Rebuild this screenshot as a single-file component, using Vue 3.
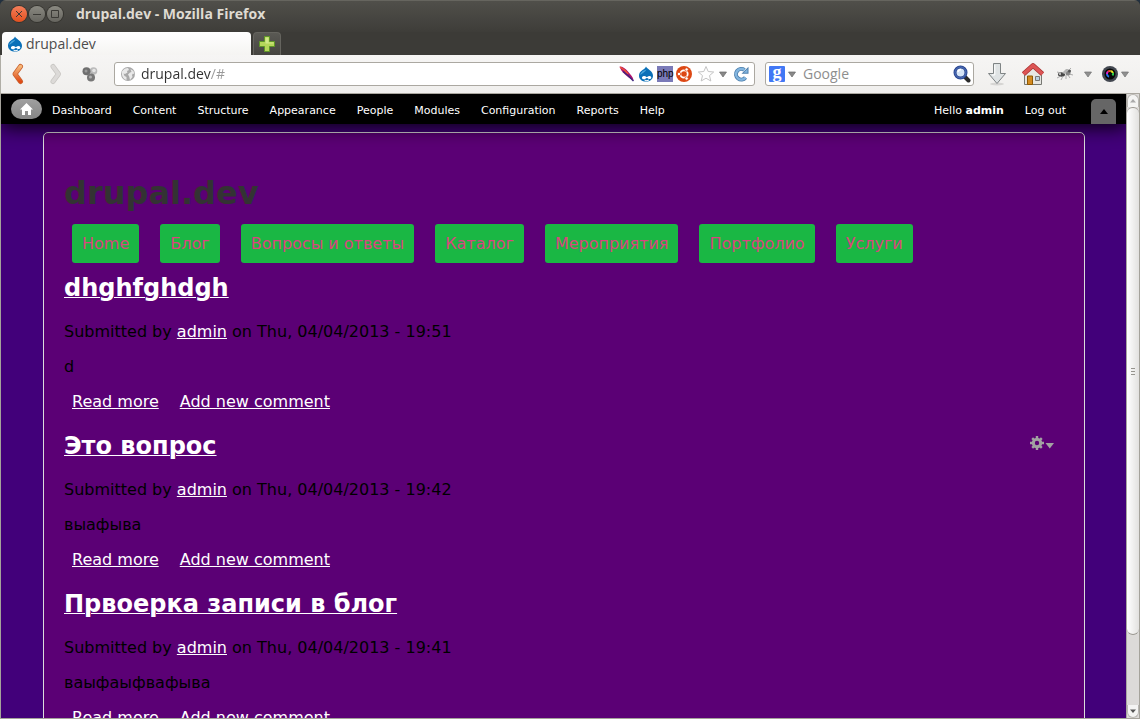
<script setup>
import { ref } from 'vue'

const address = ref('drupal.dev/#')
const query = ref('')
const adminLinks = ['Dashboard', 'Content', 'Structure', 'Appearance', 'People', 'Modules', 'Configuration', 'Reports', 'Help']
const menu = ['Home', 'Блог', 'Вопросы и ответы', 'Каталог', 'Мероприятия', 'Портфолио', 'Услуги']
const posts = [
  { title: 'dhghfghdgh', time: '19:51', body: 'd' },
  { title: 'Это вопрос', time: '19:42', body: 'выафыва', tools: true },
  { title: 'Првоерка записи в блог', time: '19:41', body: 'ваыфаыфвафыва' },
]
</script>

<template>
  <div class="window">
    <header class="titlebar">
      <button class="win close" aria-label="Close">
        <svg viewBox="0 0 16 16"><path d="M5 5l6 6M11 5l-6 6" /></svg>
      </button>
      <button class="win" aria-label="Minimize">
        <svg viewBox="0 0 16 16"><path d="M4 8.500h8" /></svg>
      </button>
      <button class="win" aria-label="Maximize">
        <svg viewBox="0 0 16 16"><path d="M4.500 4.500h7v7h-7z" /></svg>
      </button>
      <span class="title">drupal.dev - Mozilla Firefox</span>
    </header>

    <div class="tabs">
      <button class="tab">
        <svg class="i16" viewBox="0 0 16 16">
          <path d="M8 .5C8.600 2 10 2.800 11.500 3.900 13.800 5.500 15 7.500 15 9.700 15 13.200 12 15.500 8 15.500S1 13.200 1 9.700C1 7.500 2.200 5.600 4.500 4 6.200 2.900 7.500 2 8 .5z" fill="#0a70b8" />
          <path d="M6 4.500C4 5.500 2.600 7 2.300 9 4.500 7 7 6 8.500 3.500z" fill="#4ba6dc" />
          <path d="M4 11.200C5 9.600 7 9.800 8.800 11.200 10.500 9.800 12.600 9.600 13.200 11 13.700 12.700 12 13.400 11 13 10 12.600 9.500 11.800 8.800 12 7.800 12.300 7 13.500 5.500 13.300 4.300 13.100 3.700 12.200 4 11.200z" fill="#fff" />
          <path d="M6.500 14.200q2.500 1 4.500-.2" stroke="#fff" fill="none" />
        </svg>
        <span>drupal.dev</span>
      </button>
      <button class="newtab" aria-label="New tab">
        <svg class="i16" viewBox="0 0 16 16"><path d="M5.500 .5h5v5H15.500v5h-5V15.500h-5v-5H.5v-5h5z" fill="#b6d65a" stroke="#5f9628" /><path d="M6.500 1.500h3v5H14.500v1H6.500z" fill="#d2e88a" /></svg>
      </button>
    </div>

    <div class="toolbar">
      <button class="icon back" aria-label="Back">
        <svg width="14" height="22" viewBox="0 0 14 22">
          <defs><linearGradient id="og" x2="0" y2="1"><stop stop-color="#f6b778" /><stop offset="1" stop-color="#df4a17" /></linearGradient></defs>
          <path d="M9.500 3.500L4 11 9.500 18.500" fill="none" stroke="#c9622f" stroke-width="5" stroke-linecap="round" stroke-linejoin="round" />
          <path d="M9.500 3.500L4 11 9.500 18.500" fill="none" stroke="url(#og)" stroke-width="3.500" stroke-linecap="round" stroke-linejoin="round" />
        </svg>
      </button>
      <button class="icon forward" aria-label="Forward">
        <svg width="14" height="22" viewBox="0 0 14 22">
          <path d="M4 3.500L9.500 11 4 18.500" fill="none" stroke="#c8c6c3" stroke-width="5" stroke-linecap="round" stroke-linejoin="round" />
          <path d="M4 3.500L9.500 11 4 18.500" fill="none" stroke="#dcdad8" stroke-width="3.500" stroke-linecap="round" stroke-linejoin="round" />
        </svg>
      </button>
      <button class="icon dots" aria-label="Extension">
        <svg class="i16" viewBox="0 0 16 16"><circle cx="11.500" cy="5" r="3.800" fill="#bababa" /><circle cx="12" cy="4.500" r="1.800" fill="#e4e4e4" /><circle cx="4.500" cy="5.200" r="4" fill="#6f6f6f" /><circle cx="4" cy="5" r="1.500" fill="#999" /><circle cx="9" cy="11.500" r="4" fill="#777" /><circle cx="8.500" cy="11" r="1.500" fill="#b0b0b0" /></svg>
      </button>

      <div class="field address">
        <svg class="i16" viewBox="0 0 16 16"><circle cx="8" cy="8" r="7" fill="#a8a8a8" /><path d="M2 5.500C3.500 3 6 2 8 2l1 2-2 1 .5 1.500L5 8 3.500 7.500 4.500 10 6.500 11v3C3 13 1.500 10 2 5.500zM10.500 3l3 2 .9 3.500-1.400-1-1 1.500.5 2L10 14l-.8-3.500-1.200-2L10 6.500l1.500-.5z" fill="#e9e9e9" /></svg>
        <input v-model="address" class="url" aria-label="Address" />
        <svg class="i16" viewBox="0 0 16 16"><path d="M.5.5C4 .5 6.500 2.500 9 5.500S14 11 14.500 14C11 13 8 10.500 5.500 8S1.500 3.500.5.500z" fill="#b0126e" /><path d="M1 1l5 3.500L9 8" stroke="#ee5530" fill="none" stroke-width="1.500" /><path d="M4 5.500L9 9.500l5.500 5.500" stroke="#3d267e" fill="none" stroke-width="1.500" /></svg>
        <svg class="i16" viewBox="0 0 16 16">
          <path d="M8 .5C8.600 2 10 2.800 11.500 3.900 13.800 5.500 15 7.500 15 9.700 15 13.200 12 15.500 8 15.500S1 13.200 1 9.700C1 7.500 2.200 5.600 4.500 4 6.200 2.900 7.500 2 8 .5z" fill="#0a70b8" />
          <path d="M6 4.500C4 5.500 2.600 7 2.300 9 4.500 7 7 6 8.500 3.500z" fill="#4ba6dc" />
          <path d="M4 11.200C5 9.600 7 9.800 8.800 11.200 10.500 9.800 12.600 9.600 13.200 11 13.700 12.700 12 13.400 11 13 10 12.600 9.500 11.800 8.800 12 7.800 12.300 7 13.500 5.500 13.300 4.300 13.100 3.700 12.200 4 11.200z" fill="#fff" />
          <path d="M6.500 14.200q2.500 1 4.500-.2" stroke="#fff" fill="none" />
        </svg>
        <span class="php">php</span>
        <svg class="i16" viewBox="0 0 16 16"><circle cx="8" cy="8" r="8" fill="#dd4814" /><circle cx="8" cy="8" r="3.700" fill="none" stroke="#fff" stroke-width="1.800" /><g fill="#fff" stroke="#dd4814" stroke-width=".8"><circle cx="3" cy="8" r="1.700" /><circle cx="10.600" cy="3.500" r="1.700" /><circle cx="10.600" cy="12.500" r="1.700" /></g></svg>
        <svg class="star" viewBox="0 0 18 18"><path d="M9 1.500l2.200 5 5.500.5-4.200 3.600 1.300 5.400L9 13.200 4.200 16l1.300-5.400L1.300 7l5.500-.5z" fill="#fefefe" stroke="#c4c4c4" /></svg>
        <svg class="caret" viewBox="0 0 10 8"><path d="M1.500 2h7L5 7z" fill="#888" stroke="#686868" stroke-width=".7" /></svg>
        <svg class="reload" viewBox="0 0 16 16"><path d="M11.500 4A5.300 5.300 0 1 0 12.500 11.500" fill="none" stroke="#4d7fac" stroke-width="4" /><path d="M15.500.8v7H8.500z" fill="#4d7fac" /><path d="M11.500 4A5.300 5.300 0 1 0 12.500 11.500" fill="none" stroke="#82b5df" stroke-width="2.400" /><path d="M14.500 3v3.800H10.500z" fill="#82b5df" /></svg>
      </div>

      <div class="field search">
        <span class="google">g</span>
        <svg class="caret" viewBox="0 0 10 8"><path d="M1.500 2h7L5 7z" fill="#888" stroke="#686868" stroke-width=".7" /></svg>
        <input v-model="query" placeholder="Google" aria-label="Search" />
        <svg class="lens" viewBox="0 0 18 18"><path d="M12 12l3.500 3.500" stroke="#2a2a2a" stroke-width="4" stroke-linecap="round" /><circle cx="7.500" cy="7.500" r="5.500" fill="#d5e4f6" stroke="#28458f" stroke-width="3" /><circle cx="7.500" cy="7.500" r="5.500" fill="none" stroke="#5577c0" /><path d="M5 7a3 3 0 0 1 3-2.500" stroke="#fff" fill="none" stroke-width="1.500" /></svg>
      </div>

      <button class="icon download" aria-label="Downloads">
        <svg width="20" height="24" viewBox="0 0 20 24"><ellipse cx="10" cy="22" rx="7" ry="1.500" fill="#d6d5d3" /><path d="M6.500 1.500h7v10h5L10 21.500 1.500 11.500h5z" fill="#dfe3e4" stroke="#7f8485" /><path d="M7.800 3v10H5" stroke="#fff" fill="none" /></svg>
      </button>
      <button class="icon home" aria-label="Home">
        <svg width="24" height="24" viewBox="0 0 24 24"><path d="M3.500 11L12 4l8.500 7v11.500h-17z" fill="#e6e6e2" stroke="#777873" /><path d="M6.500 14h5v8.500h-5z" fill="#d48a20" stroke="#8f5902" /><path d="M14.500 14.500h4v4h-4z" fill="#b8d0e0" stroke="#777" /><path d="M2.500 12L12 3.500 21.500 12" fill="none" stroke="#a93232" stroke-width="5" stroke-linejoin="round" /><path d="M2.500 12L12 3.500 21.500 12" fill="none" stroke="#dc5555" stroke-width="3.500" stroke-linejoin="round" /></svg>
      </button>
      <button class="icon fly" aria-label="Firebug">
        <svg width="18" height="16" viewBox="0 0 18 16"><ellipse cx="5.500" cy="8.500" rx="3.500" ry="2.200" fill="#484848" /><circle cx="12" cy="7" r="2.500" fill="#888" /><circle cx="13.500" cy="5" r="1.500" fill="#555" /><path d="M6 7L10 3l3 0-4 5z" fill="#b5b5b5" /><path d="M1 12l4-2M5 14l2-4M10 13V9M14 12l-2-3M17 9l-4-1M1 6l4 1M15 2l-2 2" stroke="#999" fill="none" stroke-width=".8" /><circle cx="4" cy="8" r="1" fill="#ddd" /></svg>
      </button>
      <button class="icon more" aria-label="Firebug options"><svg class="caret" viewBox="0 0 10 8"><path d="M1.500 2h7L5 7z" fill="#909090" stroke="#747474" stroke-width=".7" /></svg></button>
      <button class="icon color" aria-label="Color picker">
        <svg width="18" height="18" viewBox="0 0 18 18"><circle cx="9" cy="9" r="8" fill="#424750" /><circle cx="9" cy="9" r="5.500" fill="#070707" /><g fill="none" stroke-width="2"><path d="M6 9a3 3 0 0 1 1-2.500" stroke="#dd1fc8" /><path d="M7 6.500A3 3 0 0 1 9.500 6" stroke="#f04a30" /><path d="M9.500 6A3 3 0 0 1 12 8" stroke="#e4df22" /><path d="M12 8a3 3 0 0 1-.5 2.500" stroke="#27cf4b" /><path d="M6 9a3 3 0 0 0 2 2.800" stroke="#2575ed" /></g></svg>
      </button>
      <button class="icon" aria-label="Color options"><svg class="caret" viewBox="0 0 10 8"><path d="M1.500 2h7L5 7z" fill="#909090" stroke="#747474" stroke-width=".7" /></svg></button>
    </div>

    <div class="view">
      <div class="page">
        <nav class="admin">
          <a class="adminhome" href="#" aria-label="Home"><svg width="13" height="12" viewBox="0 0 13 12"><path d="M6.500 0L13 6.500h-2V12H8V8H5v4H2V6.500H0z" fill="#fff" /></svg></a>
          <a v-for="l in adminLinks" :key="l" href="#">{{ l }}</a>
          <a class="hello" href="#">Hello <b>admin</b></a>
          <a href="#">Log out</a>
          <button class="toggle" aria-label="Hide shortcuts"><svg width="8" height="5" viewBox="0 0 8 5"><path d="M4 0l4 5H0z" fill="#000" /></svg></button>
        </nav>

        <main class="box">
          <h1>drupal.dev</h1>
          <nav class="menu">
            <a v-for="m in menu" :key="m" href="#">{{ m }}</a>
          </nav>
          <article v-for="p in posts" :key="p.time">
            <h2><a href="#">{{ p.title }}</a></h2>
            <button v-if="p.tools" class="gear" aria-label="Configure">
              <svg width="24" height="14" viewBox="0 0 24 14"><circle cx="7" cy="7" r="3.700" fill="none" stroke="#a2a2a2" stroke-width="3" /><path d="M7 0v3M7 11v3M0 7h3M11 7h3M2.200 2.200l2 2M9.800 9.800l2 2M11.800 2.200l-2 2M4.200 9.800l-2 2" stroke="#a2a2a2" stroke-width="2.400" /><path d="M15.500 7h8.500l-4.200 5.500z" fill="#a2a2a2" /></svg>
            </button>
            <p class="meta">Submitted by <a href="#">admin</a> on Thu, 04/04/2013 - {{ p.time }}</p>
            <p>{{ p.body }}</p>
            <div class="links"><a href="#">Read more</a><a href="#">Add new comment</a></div>
          </article>
        </main>
      </div>

      <div class="scroll">
        <div class="step up"><svg width="6" height="4" viewBox="0 0 6 4"><path d="M3 0l3 3.500H0z" fill="#aaa" /></svg></div>
        <div class="thumb"><i></i><i></i><i></i></div>
        <div class="trough"></div>
        <div class="step down"><svg width="6" height="4" viewBox="0 0 6 4"><path d="M3 4l3-3.500H0z" fill="#555" /></svg></div>
      </div>
    </div>
  </div>
</template>

<style>
body {
  background: #22303f;
}
</style>

<style scoped>
.window {
  box-sizing: border-box;
  height: 100vh;
  display: flex;
  flex-direction: column;
  overflow: hidden;
  border-radius: 6px 6px 0 0;
  background: #3c3b37;
  font-family: "DejaVu Sans", sans-serif;
}
button {
  font: inherit;
  padding: 0;
  border: 0;
  background: none;
  display: flex;
  align-items: center;
}
svg {
  display: block;
  flex: none;
}
.i16 {
  width: 16px;
  height: 16px;
}
.titlebar {
  height: 32px;
  flex: none;
  box-sizing: border-box;
  display: flex;
  align-items: center;
  gap: 2px;
  padding: 0 11px 5px;
  border-top: 1px solid #66655f;
  background: linear-gradient(#504f4a, #3e3d39);
}
.win {
  width: 16px;
  height: 16px;
  border-radius: 50%;
  background: linear-gradient(#8a8981, #66655f);
  box-shadow: 0 0 0 1px #35342f;
}
.win svg {
  width: 16px;
  height: 16px;
}
.win path {
  fill: none;
  stroke: #3b3a36;
}
.win.close {
  background: linear-gradient(#f37e5a, #e2501f);
}
.title {
  margin-left: 11px;
  font: bold 14px/20px "Open Sans", "Noto Sans", sans-serif;
  color: #dfdbd2;
}
.tabs {
  height: 23px;
  flex: none;
  display: flex;
  gap: 2px;
  padding-left: 2px;
}
.tab {
  width: 249px;
  gap: 3px;
  padding-left: 5px;
  border-radius: 4px 4px 0 0;
  background: linear-gradient(#fff, #f5f4f2);
  font: 14px/20px "Open Sans", "Noto Sans", sans-serif;
  color: #4c4c4c;
}
.newtab {
  width: 28px;
  box-sizing: border-box;
  justify-content: center;
  border: 1px solid #65645e;
  border-bottom: 0;
  border-radius: 4px 4px 0 0;
  background: linear-gradient(#5a5954, #454440);
}
.toolbar {
  height: 39px;
  flex: none;
  box-sizing: border-box;
  display: flex;
  align-items: center;
  padding: 0 10px;
  border-left: 1px solid #b0aea6;
  border-bottom: 1px solid #aaa7a0;
  background: linear-gradient(#f6f5f4, #f0efed);
}
.back {
  margin-right: 24px;
}
.forward {
  margin-right: 19px;
}
.dots {
  margin-right: 16px;
}
.field {
  height: 24px;
  box-sizing: border-box;
  display: flex;
  align-items: center;
  border: 1px solid #aba8a1;
  border-radius: 3px;
  background: #fff;
}
.address {
  flex: 1;
  min-width: 0;
  padding: 0 5px;
  gap: 3px;
}
.search {
  width: 209px;
  margin: 0 13px 0 10px;
  padding: 0 2px 0 3px;
}
input {
  flex: 1;
  min-width: 0;
  padding: 0;
  border: 0;
  outline: 0;
  background: none;
  font: 14px/20px "Open Sans", "Noto Sans", sans-serif;
  color: #333;
}
input::placeholder {
  color: #8e8e8e;
  opacity: 1;
}
.url {
  margin-left: 2px;
  color: transparent;
  background: linear-gradient(90deg, #303030 70px, #999 70px);
  background-clip: text;
}
.php {
  width: 16px;
  height: 16px;
  background: #7a7ab8;
  font: 10px/15px "Liberation Sans", sans-serif;
  color: #000;
  text-align: center;
}
.star {
  width: 18px;
  height: 18px;
  margin-left: 2px;
}
.caret {
  width: 10px;
  height: 8px;
}
.reload {
  width: 16px;
  height: 16px;
  margin-left: 2px;
}
.google {
  width: 16px;
  height: 16px;
  margin-right: 2px;
  background: #4278f5;
  border-radius: 1px;
  font: bold 18px/12px "Liberation Serif", serif;
  color: #fff;
  text-align: center;
}
.search input {
  margin-left: 6px;
}
.lens {
  width: 18px;
  height: 18px;
}
.download {
  margin-right: 14px;
}
.home {
  margin-right: 11px;
}
.fly {
  margin-right: 9px;
}
.more {
  margin-right: 8px;
}
.color {
  margin-right: 1px;
}
.view {
  flex: 1;
  min-height: 0;
  display: flex;
  border: 1px solid #a5a39b;
  border-top: 0;
}
.page {
  flex: 1;
  min-width: 0;
  overflow: hidden;
  background: #42007a;
}
.admin {
  position: relative;
  height: 30px;
  display: flex;
  align-items: center;
  gap: 21px;
  padding: 0 10px;
  background: #000;
  box-shadow: 0 4px 18px rgba(0, 0, 0, 0.85);
  font-size: 11px;
  line-height: 16px;
}
.admin a {
  padding-top: 3px;
  color: #fff;
  text-decoration: none;
}
.admin .adminhome {
  width: 31px;
  height: 20px;
  margin-right: -11px;
  padding: 0;
  display: flex;
  align-items: center;
  justify-content: center;
  border-radius: 10px;
  background: linear-gradient(#a0a0a0, #858585);
}
.admin .hello {
  margin-left: auto;
}
.toggle {
  width: 25px;
  height: 25px;
  margin-left: 4px;
  align-self: flex-end;
  justify-content: center;
  border-radius: 5px 5px 0 0;
  background: #666;
}
.box {
  margin: 8px 41px 0 42px;
  padding: 41px 20px 20px;
  border: 1px solid #dcdcdc;
  border-radius: 5px;
  background: #5b0075;
  font-size: 16px;
  line-height: 19px;
}
h1 {
  margin: 0 0 12px;
  font-size: 32px;
  line-height: 38px;
  color: #333;
}
.menu {
  display: flex;
  gap: 21px;
  margin: 0 8px 11px;
}
.menu a {
  padding: 10px;
  border-radius: 3px;
  background: #1ab744;
  color: #d8467e;
  text-decoration: none;
  white-space: nowrap;
}
article {
  position: relative;
  margin-bottom: 21px;
}
article a {
  color: #fff;
  text-decoration-thickness: 1px;
}
h2 {
  margin: 0 0 20px;
  font-size: 24px;
  line-height: 28px;
}
p {
  margin: 0 0 16px;
  color: #000;
}
.links {
  display: flex;
  gap: 21px;
  padding-left: 8px;
}
.gear {
  position: absolute;
  top: 4px;
  right: 10px;
}
.scroll {
  width: 13px;
  box-sizing: border-box;
  display: flex;
  flex-direction: column;
  border-left: 1px solid #aaa8a2;
  background: #dcdad8;
}
.step {
  height: 12px;
  flex: none;
  display: flex;
  align-items: center;
  justify-content: center;
  background: #f4f4f3;
  border: 1px solid #b8b6b2;
}
.up {
  border-radius: 6px 6px 0 0;
  border-bottom: 0;
}
.down {
  border-radius: 0 0 6px 6px;
  border-top: 0;
}
.thumb {
  flex: 529;
  display: flex;
  flex-direction: column;
  align-items: center;
  justify-content: center;
  gap: 2px;
  border: 1px solid #999790;
  border-width: 1px 0;
  border-radius: 6px;
  background: linear-gradient(90deg, #fff, #e2e1df);
}
.thumb i {
  width: 4px;
  height: 1px;
  background: #96948e;
}
.trough {
  flex: 70;
}
</style>
